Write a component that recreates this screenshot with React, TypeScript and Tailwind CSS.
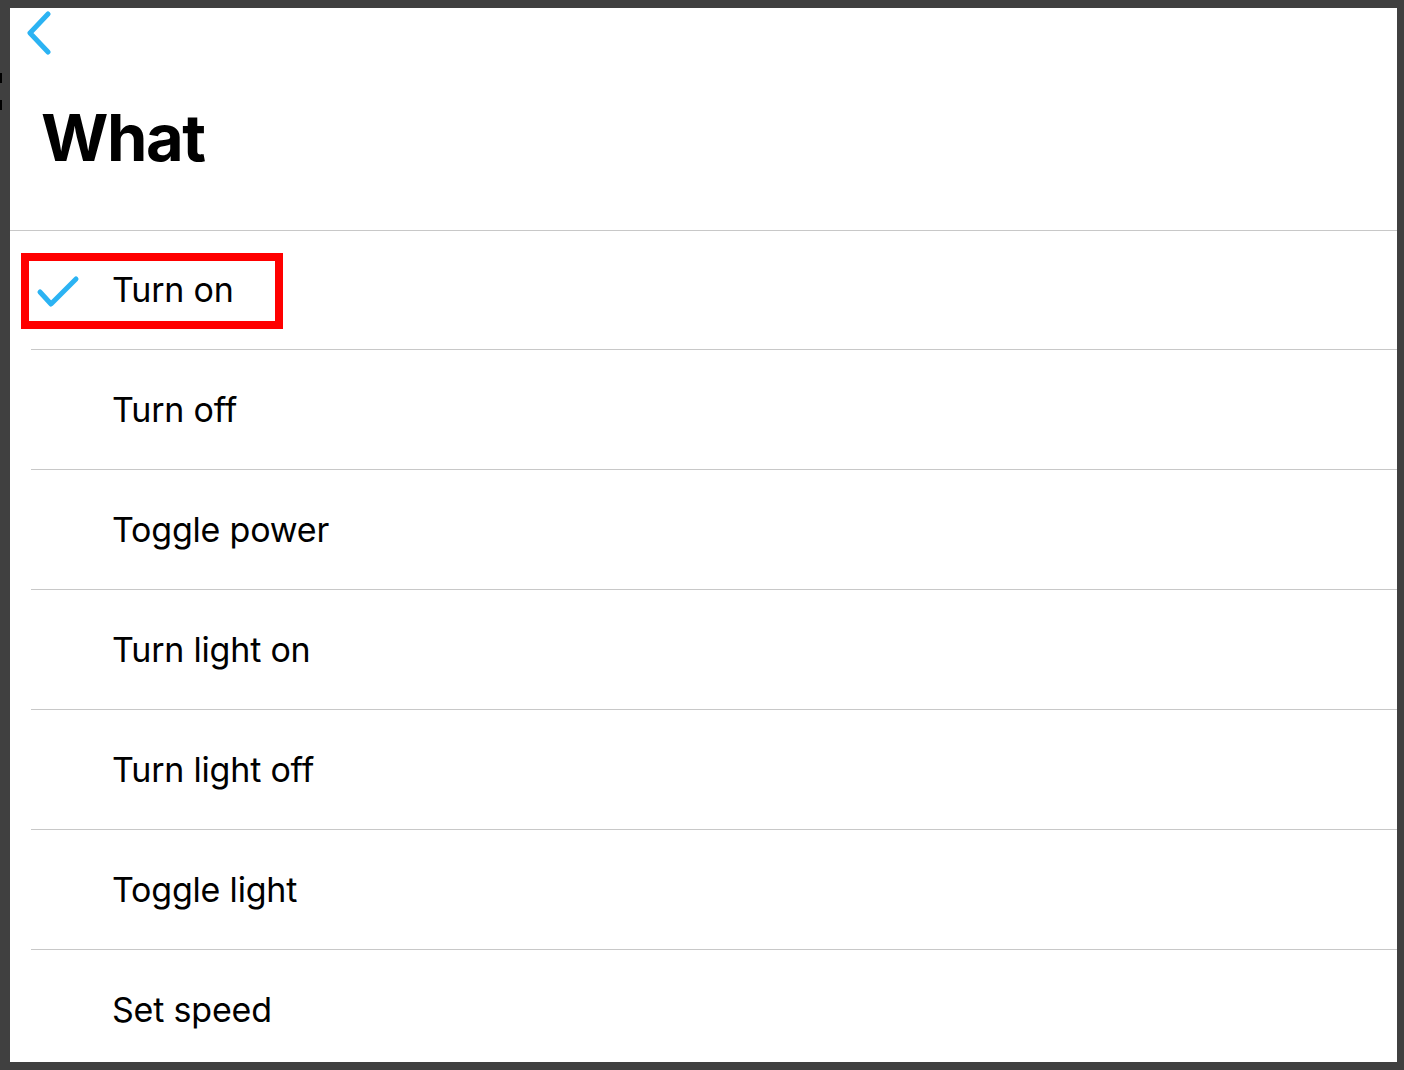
const items = [
  "Turn on",
  "Turn off",
  "Toggle power",
  "Turn light on",
  "Turn light off",
  "Toggle light",
  "Set speed",
];

function Chevron() {
  return (
    <svg width="30" height="46" viewBox="0 0 30 46" fill="none">
      <path
        d="M23 5 L5 24 L23 43"
        stroke="#2bb3f3"
        strokeWidth="5"
        strokeLinecap="round"
        strokeLinejoin="round"
      />
    </svg>
  );
}

function Check() {
  return (
    <svg width="44" height="36" viewBox="0 0 44 36" fill="none">
      <path
        d="M4 20 L15 32 L40 7"
        stroke="#2bb3f3"
        strokeWidth="5"
        strokeLinecap="round"
        strokeLinejoin="round"
      />
    </svg>
  );
}

export default function App() {
  return (
    <div
      className="relative w-[1404px] h-[1070px] bg-[#404040] pt-[8px] pl-[10px] pr-[7px] pb-[8px] overflow-hidden"
      style={{ fontFamily: "Inter, 'Noto Sans', sans-serif" }}
    >
      {/* edge marks */}
      <div className="absolute left-0 top-[73px] w-[2px] h-[10px] bg-black" />
      <div className="absolute left-0 top-[100px] w-[2px] h-[10px] bg-black" />

      <div className="h-full bg-white overflow-hidden">
        {/* header */}
        <div className="h-[223px] border-b border-[#c8c8c8] flex flex-col">
          <div className="pl-[15px] pt-[1px]">
            <Chevron />
          </div>
          <h1 className="pl-[31px] mt-[50px] text-[65px] leading-none font-bold tracking-[-1.5px] text-black">
            What
          </h1>
        </div>

        {/* rows */}
        <div className="pl-[21px]">
          {items.map((label, i) => (
            <div
              key={label}
              className={
                i === 0
                  ? "relative h-[119px] flex items-center border-b border-[#c8c8c8]"
                  : "relative h-[120px] flex items-center border-b border-[#c8c8c8]"
              }
            >
              <div className="w-[95px] -ml-[14px] pl-[19px] flex items-center">
                {i === 0 && <Check />}
              </div>
              <span className="text-[34px] text-black leading-none tracking-[-0.2px]">{label}</span>
              {i === 0 && (
                <div className="absolute left-[-10px] top-[22px] w-[262px] h-[76px] border-[8px] border-[#ff0000]" />
              )}
            </div>
          ))}
        </div>
      </div>
    </div>
  );
}
